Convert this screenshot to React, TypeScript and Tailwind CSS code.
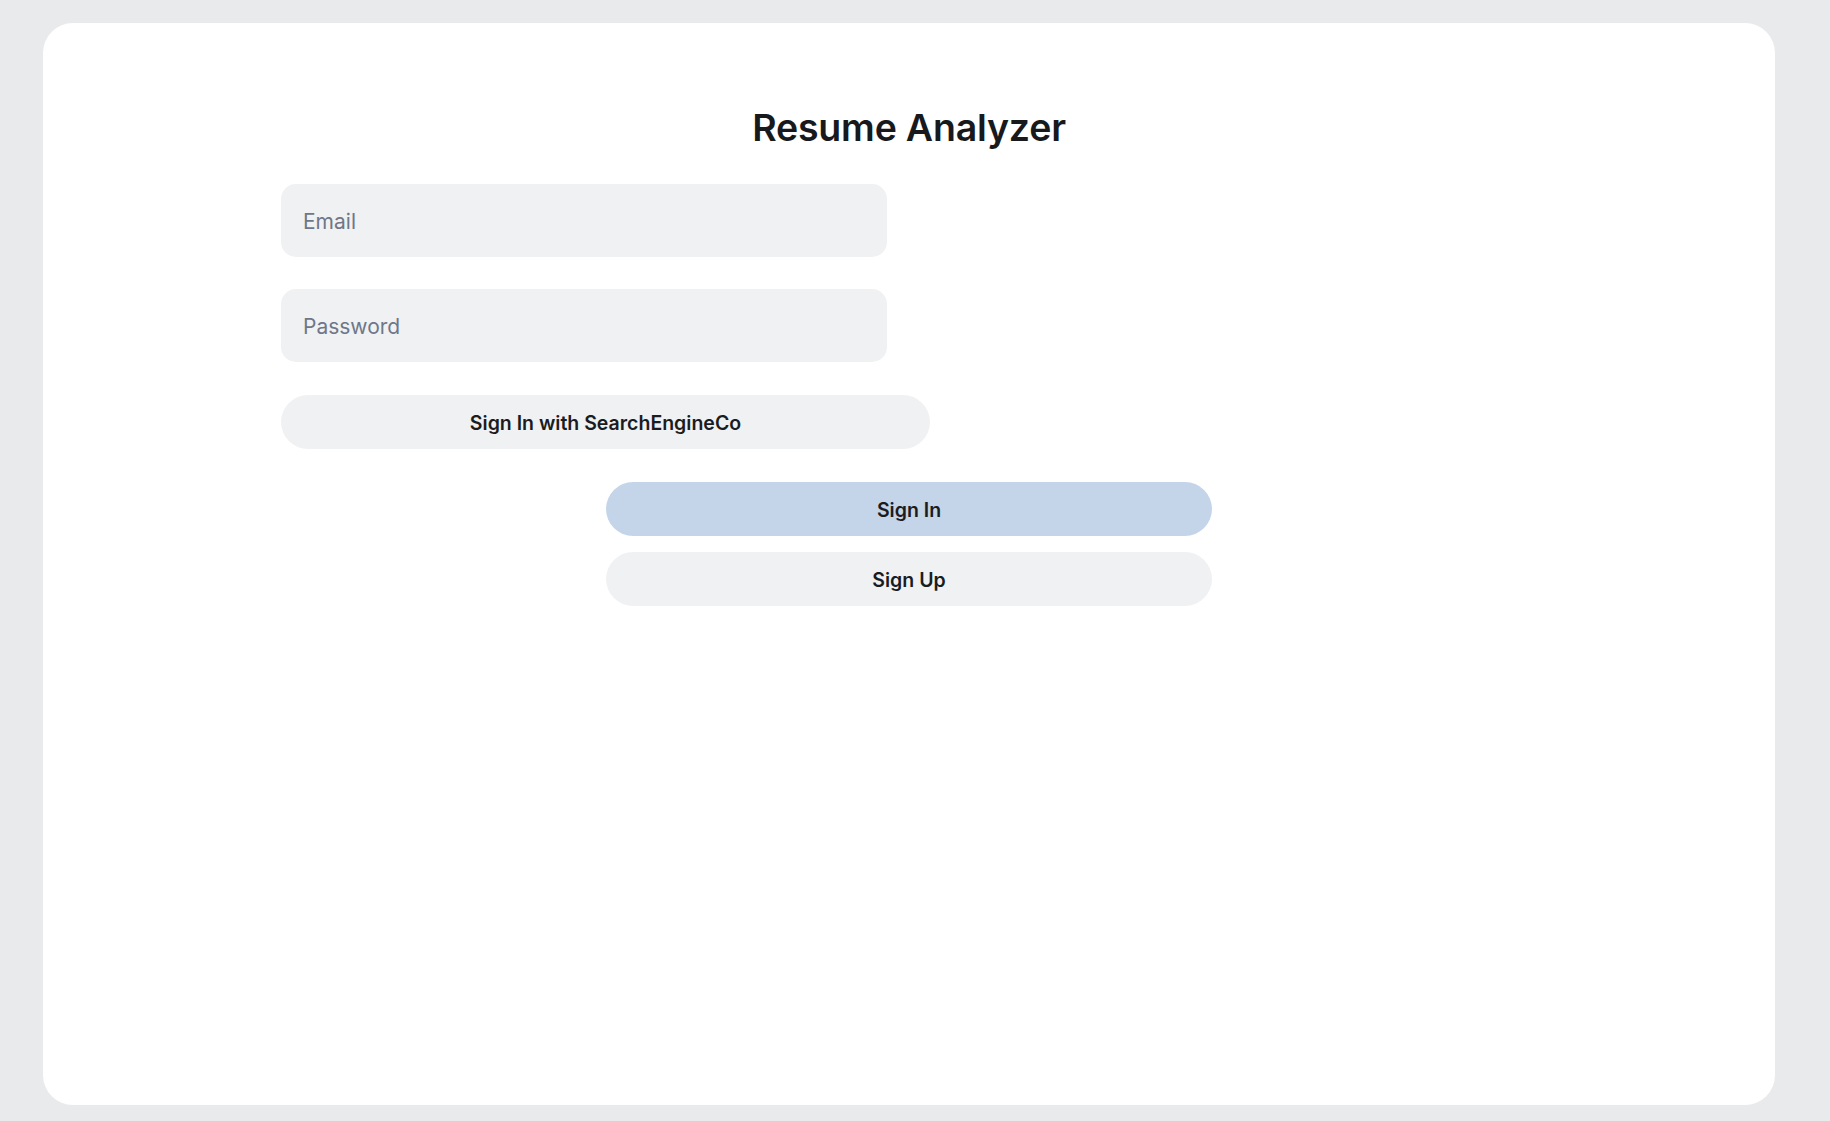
import React from "react";

const font = { fontFamily: "Inter, 'Noto Sans', sans-serif" };

export default function App() {
  return (
    <div
      className="min-h-screen bg-[#e9eaec] pl-[43px] pr-[55px] pt-[23px] pb-[16px]"
      style={font}
    >
      <div className="flex h-[1082px] flex-col rounded-[30px] bg-white px-[238px] pt-[82px]">
        <h1 className="text-center text-[37.5px] leading-[46px] font-semibold tracking-[-0.2px] text-[#17191c]">
          Resume Analyzer
        </h1>

        <form className="mt-[33px] flex flex-col" onSubmit={(e) => e.preventDefault()}>
          <input
            type="email"
            placeholder="Email"
            className="h-[73px] w-[606px] rounded-[15px] bg-[#f0f1f3] px-[22px] pt-[2px] text-[21px] text-[#17191c] outline-none placeholder:text-[#6e7787]"
          />
          <input
            type="password"
            placeholder="Password"
            className="mt-[32px] h-[73px] w-[606px] rounded-[15px] bg-[#f0f1f3] px-[22px] pt-[2px] text-[21px] text-[#17191c] outline-none placeholder:text-[#6e7787]"
          />
          <button
            type="button"
            className="mt-[33px] h-[54px] w-[649px] rounded-full bg-[#f0f1f3] pt-[3px] text-[19.5px] font-semibold text-[#1a1c1f]"
          >
            Sign In with SearchEngineCo
          </button>
          <button
            type="submit"
            className="mx-auto mt-[33px] h-[54px] w-[606px] rounded-full bg-[#c4d4e9] pt-[3px] text-[19.5px] font-semibold text-[#1a1c1f]"
          >
            Sign In
          </button>
          <button
            type="button"
            className="mx-auto mt-[16px] h-[54px] w-[606px] rounded-full bg-[#f0f1f3] pt-[3px] text-[19.5px] font-semibold text-[#1a1c1f]"
          >
            Sign Up
          </button>
        </form>
      </div>
    </div>
  );
}
